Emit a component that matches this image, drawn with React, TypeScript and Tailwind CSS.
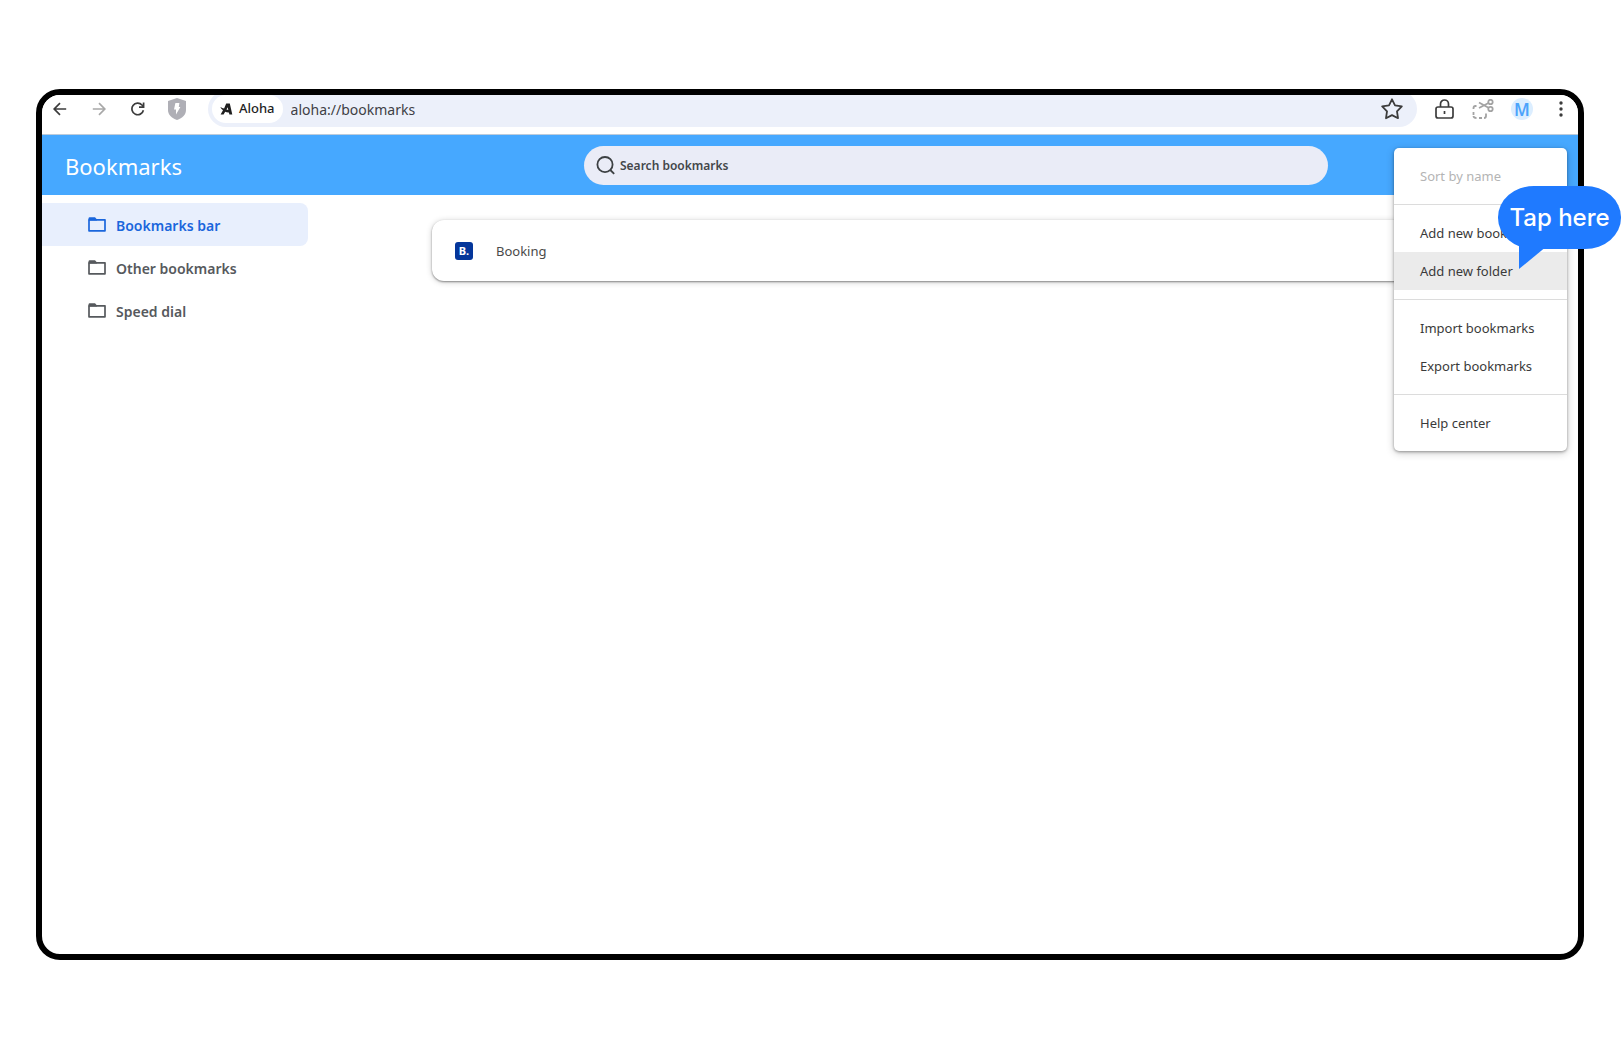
import type { ReactNode } from "react"

const folders = [
  { name: "Bookmarks bar", active: true },
  { name: "Other bookmarks", active: false },
  { name: "Speed dial", active: false },
]

const menuGroups = [
  [{ label: "Sort by name", disabled: true }],
  [{ label: "Add new bookmark" }, { label: "Add new folder", hovered: true }],
  [{ label: "Import bookmarks" }, { label: "Export bookmarks" }],
  [{ label: "Help center" }],
] as { label: string; disabled?: boolean; hovered?: boolean }[][]

function IconButton({ label, children }: { label: string; children: ReactNode }) {
  return (
    <button aria-label={label} className="flex h-6 w-6 shrink-0 items-center justify-center">
      {children}
    </button>
  )
}

function FolderIcon() {
  return (
    <svg viewBox="0 0 18 15" className="h-[15px] w-[18px] shrink-0" fill="none" stroke="currentColor" strokeWidth="1.7">
      <path d="M1 13.2V2.8h16v11H1z" strokeLinejoin="round" />
      <path d="M0.6 1.2Q0.6 0.2 1.6 0.2H7l2 2.2v1.2H0.6z" fill="currentColor" stroke="none" />
    </svg>
  )
}

function Toolbar() {
  return (
    <div className="-mt-1 flex h-11 items-center border-b border-[#bccbdb] bg-white pr-[5px] pb-[7px] pl-[6px] text-[#3c3c3c]">
      <div className="flex items-center gap-[15px]">
        <IconButton label="Back">
          <svg viewBox="0 0 14 14" className="h-[14px] w-[14px]" fill="none" stroke="currentColor" strokeWidth="1.7">
            <path d="M13.2 7H1.4M7 1.2L1.2 7L7 12.8" />
          </svg>
        </IconButton>
        <IconButton label="Forward">
          <svg viewBox="0 0 14 14" className="h-[14px] w-[14px] text-[#a8a8a8]" fill="none" stroke="currentColor" strokeWidth="1.7">
            <path d="M0.8 7h11.8M7 1.2L12.8 7L7 12.8" />
          </svg>
        </IconButton>
        <IconButton label="Reload">
          <svg viewBox="0 0 14 14" className="h-[14px] w-[14px]" fill="none" stroke="currentColor" strokeWidth="1.7">
            <path d="M12.4 8.2A5.8 5.8 0 1 1 11 3L12.4 4.6" />
            <path d="M12.6 0.6V5.2H8" />
          </svg>
        </IconButton>
        <IconButton label="Ad blocker">
          <svg viewBox="0 0 18 22" className="h-[22px] w-[18px]">
            <path d="M9 0L18 3v9c0 4.6-3.5 8.2-9 10C3.5 20.2 0 16.6 0 12V3z" fill="#afafb6" />
            <path d="M7.400 5h4L10.800 9H12.400L8 16.500V11.500H6z" fill="#fff" />
          </svg>
        </IconButton>
      </div>

      <div className="ml-[19px] flex h-9 min-w-0 flex-1 items-center rounded-full bg-[#ecf0fa] pr-[13px] pl-1">
        <span className="flex h-7 shrink-0 items-center gap-[6px] rounded-full bg-white px-2 text-[13px] font-medium text-[#1f1f1f]">
          <svg viewBox="0 0 13 12" className="h-3 w-[13px]" fill="currentColor">
            <path d="M6.200 0.500H9.800L12.300 11.500H9.400L8.900 9.400Q6.800 9.500 5.200 8.700L3.600 11.500H0.600L3 7.300Q1 6 0.300 3.800Q2 5.300 4.100 5.600zM6.500 6.500Q7.300 6.900 8.300 6.900L7.700 4.200z" />
          </svg>
          Aloha
        </span>
        <input
          aria-label="Address"
          defaultValue="aloha://bookmarks"
          className="ml-2 min-w-0 flex-1 bg-transparent text-[14px] text-[#3f4045] outline-none"
        />
        <IconButton label="Bookmark this page">
          <svg viewBox="0 0 22 22" className="h-[22px] w-[22px] shrink-0" fill="none" stroke="currentColor" strokeWidth="1.8" strokeLinejoin="round">
            <path d="M11 1.3L14 7.3L20.8 8.4L16 13.3L17 20.2L11 17.1L5 20.2L6 13.3L1.2 8.4L8 7.3z" />
          </svg>
        </IconButton>
      </div>

      <div className="ml-[15px] flex items-center gap-[15px]">
        <IconButton label="Passwords">
          <svg viewBox="0 0 19 20" className="h-5 w-[19px]" fill="none" stroke="currentColor" strokeWidth="1.7">
            <rect x="1" y="8" width="17" height="11" rx="2" />
            <path d="M5.500 8V5a4 4 0 0 1 8 0V8M9.500 12v3" />
          </svg>
        </IconButton>
        <IconButton label="Screenshot">
          <svg viewBox="0 0 22 20" className="h-5 w-[22px] shrink-0 text-[#a3a3a3]" fill="none" stroke="currentColor" strokeWidth="1.8">
            <circle cx="18.5" cy="3" r="2.2" />
            <circle cx="18.5" cy="10" r="2.2" />
            <path d="M16.5 8.8L7 3.5M16.5 4L7 9" />
            <path d="M4.5 7H3.5Q1.5 7 1.5 9v1M1.5 13v3M4.5 19Q1.5 19 1.500 17M7 19h3M14 14.5V17Q14 19 12 19" />
          </svg>
        </IconButton>
        <button aria-label="Profile" className="flex h-6 w-6 items-center justify-center">
          <span className="flex h-[22px] w-[22px] items-center justify-center rounded-full bg-[#dceeff] text-[17px] leading-none font-semibold text-[#4da3fb]">
            M
          </span>
        </button>
        <IconButton label="Menu">
          <svg viewBox="0 0 4 16" className="h-4 w-1" fill="currentColor">
            <circle cx="2" cy="2" r="1.7" />
            <circle cx="2" cy="8" r="1.7" />
            <circle cx="2" cy="14" r="1.7" />
          </svg>
        </IconButton>
      </div>
    </div>
  )
}

function Header() {
  return (
    <header className="flex h-[60px] items-center bg-[#46a8ff] pr-[250px]">
      <h1 className="w-[542px] shrink-0 pt-[2px] pl-[23px] text-[22px] text-white">Bookmarks</h1>
      <label className="flex h-[39px] min-w-0 flex-1 items-center gap-[5px] rounded-full bg-[#eaecf7] px-3">
        <svg viewBox="0 0 19 19" className="h-[19px] w-[19px] shrink-0" fill="none" stroke="#3c4043" strokeWidth="1.8">
          <circle cx="9" cy="8.6" r="7.6" />
          <path d="M14.3 14L18.2 17.9" />
        </svg>
        <input
          type="search"
          aria-label="Search bookmarks"
          placeholder="Search bookmarks"
          className="min-w-0 flex-1 bg-transparent pt-[2px] text-[12px] font-semibold outline-none placeholder:text-[#43464a]"
        />
      </label>
    </header>
  )
}

function Sidebar() {
  return (
    <nav className="w-[266px] shrink-0 pt-2">
      {folders.map((folder) => (
        <a
          key={folder.name}
          href="#"
          className={`flex h-[43px] items-center gap-[10px] rounded-r-lg pl-[46px] text-[14px] font-semibold ${
            folder.active ? "bg-[#e8effd] text-[#1a66dc]" : "text-[#56595d]"
          }`}
        >
          <FolderIcon />
          <span className="pt-[2px]">{folder.name}</span>
        </a>
      ))}
    </nav>
  )
}

function ContextMenu() {
  return (
    <div
      role="menu"
      className="absolute top-[53px] right-[11px] w-[173px] divide-y divide-[#dcdcdc] rounded-[5px] bg-white shadow-[0_1px_3px_rgba(0,0,0,0.35),0_2px_8px_rgba(0,0,0,0.2)]"
    >
      {menuGroups.map((group) => (
        <div key={group[0].label} className="py-[9px]">
          {group.map((item) => (
            <button
              key={item.label}
              role="menuitem"
              disabled={item.disabled}
              className={`block h-[38px] w-full pt-[2px] pl-[26px] text-left text-[13px] whitespace-nowrap ${
                item.disabled ? "text-[#b4b4b4]" : "text-[#3a3a3a]"
              } ${item.hovered ? "bg-[#ebebeb]" : ""}`}
            >
              {item.label}
            </button>
          ))}
        </div>
      ))}
    </div>
  )
}

function TapHint() {
  return (
    <div className="absolute top-[97px] -right-[37px] h-[83px] w-[123px]">
      <div className="flex h-[63px] items-center justify-center rounded-[36px/31px] bg-[#1f7aff] font-['Inter',sans-serif] text-[24px] font-medium whitespace-nowrap text-white">
        Tap here
      </div>
      <svg viewBox="0 0 28 33" className="absolute top-[50px] left-[21px] h-[33px] w-7">
        <path d="M0 0V33L28 10V0z" fill="#1f7aff" />
      </svg>
    </div>
  )
}

export default function App() {
  return (
    <div className="min-h-screen overflow-x-hidden bg-white px-9 py-[89px] pr-[37px] font-['Noto_Sans',sans-serif]">
      <div className="relative">
        <div className="relative min-h-[871px] overflow-hidden rounded-[24px] border-6 border-black bg-white">
          <Toolbar />
          <Header />
          <div className="flex">
            <Sidebar />
            <main className="min-w-0 flex-1 pt-[25px] pr-6 pl-[124px]">
              <a
                href="#"
                className="flex h-[61px] items-center gap-[23px] rounded-xl bg-white pl-[23px] text-[13px] text-[#4a4a4a] shadow-[0_1px_2px_rgba(0,0,0,0.4),0_1px_6px_rgba(0,0,0,0.2)]"
              >
                <span className="flex h-[18px] w-[18px] items-center justify-center rounded-[3px] bg-[#04369b] text-[11px] leading-none font-bold text-white">
                  B.
                </span>
                <span className="pt-[2px]">Booking</span>
              </a>
            </main>
          </div>
          <ContextMenu />
        </div>
        <TapHint />
      </div>
    </div>
  )
}
